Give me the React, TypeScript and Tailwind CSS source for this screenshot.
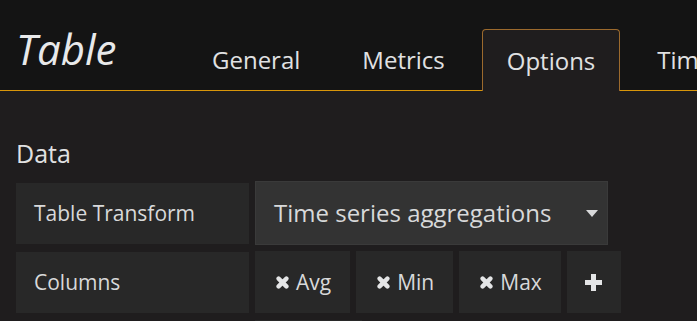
import React from "react";

const tabs = ["General", "Metrics", "Options", "Time range"];
const columns = ["Avg", "Min", "Max"];

function RemoveIcon() {
  return (
    <svg width="13" height="13" viewBox="0 0 13 13" className="shrink-0">
      <path
        d="M2.6 2.6 L10.4 10.4 M10.4 2.6 L2.6 10.4"
        stroke="#e4e5e6"
        strokeWidth="4.4"
        strokeLinecap="round"
      />
    </svg>
  );
}

function PlusIcon() {
  return (
    <svg width="17" height="17" viewBox="0 0 17 17">
      <path d="M6 0h5v6h6v5h-6v6H6v-6H0V6h6z" fill="#e4e5e6" />
    </svg>
  );
}

export default function App() {
  return (
    <div className="min-h-screen overflow-hidden bg-[#1f1d1e] text-[#d8d9da] font-['Open_Sans',sans-serif]">
      <header className="flex h-[91px] items-end border-b border-[#d8960a] bg-[#141414]">
        <h1 className="mb-[20px] w-[187px] shrink-0 self-end pl-[16px] text-[42px] font-normal italic leading-none text-[#e8e9ea]">
          Table
        </h1>
        <nav className="flex shrink-0 gap-[12px]">
          {tabs.map((tab) => {
            const active = tab === "Options";
            return (
              <div
                key={tab}
                className={
                  active
                    ? "-mb-px flex h-[62px] items-center rounded-t-[4px] border border-b-0 border-[#9c6a2d] bg-[#1f1d1e] px-[24px] text-[24px] leading-none text-[#e0e1e2] whitespace-nowrap"
                    : "-mb-px flex h-[62px] items-center border border-transparent px-[24px] text-[24px] leading-none text-[#e0e1e2] whitespace-nowrap"
                }
              >
                {tab}
              </div>
            );
          })}
        </nav>
      </header>

      <section className="px-[16px]">
        <h2 className="mt-[50px] text-[25px] font-normal leading-none text-[#e0e1e2]">
          Data
        </h2>

        <div className="mt-[15px] flex items-center gap-[6px]">
          <div className="flex h-[61px] w-[233px] items-center bg-[#282828] pl-[18px] text-[21px] leading-none">
            Table Transform
          </div>
          <div className="flex h-[64px] w-[353px] items-center justify-between border border-[#3a3a3a] bg-[#333333] pl-[18px] pr-[9px] text-[24px] leading-none">
            <span>Time series aggregations</span>
            <svg width="12" height="7" viewBox="0 0 12 7">
              <path d="M0 0h12L6 7z" fill="#d8d9da" />
            </svg>
          </div>
        </div>

        <div className="mt-[6px] flex items-center gap-[6px]">
          <div className="flex h-[61px] w-[233px] items-center bg-[#282828] pl-[18px] text-[21px] leading-none">
            Columns
          </div>
          {columns.map((c) => (
            <div
              key={c}
              className="flex h-[62px] items-center gap-[7px] bg-[#282828] pl-[21px] pr-[19px] text-[21px] leading-none"
            >
              <RemoveIcon />
              <span>{c}</span>
            </div>
          ))}
          <div className="flex h-[62px] w-[54px] items-center justify-center bg-[#282828]">
            <PlusIcon />
          </div>
        </div>

        <div className="mt-[7px] flex items-center gap-[6px]">
          <div className="flex h-[61px] w-[233px] items-center bg-[#282828] pl-[18px] text-[21px] leading-none">
            Column Styles
          </div>
          <div className="flex h-[62px] w-[107px] items-center bg-[#282828] pl-[18px] text-[21px] leading-none">
            Options
          </div>
        </div>
      </section>
    </div>
  );
}
